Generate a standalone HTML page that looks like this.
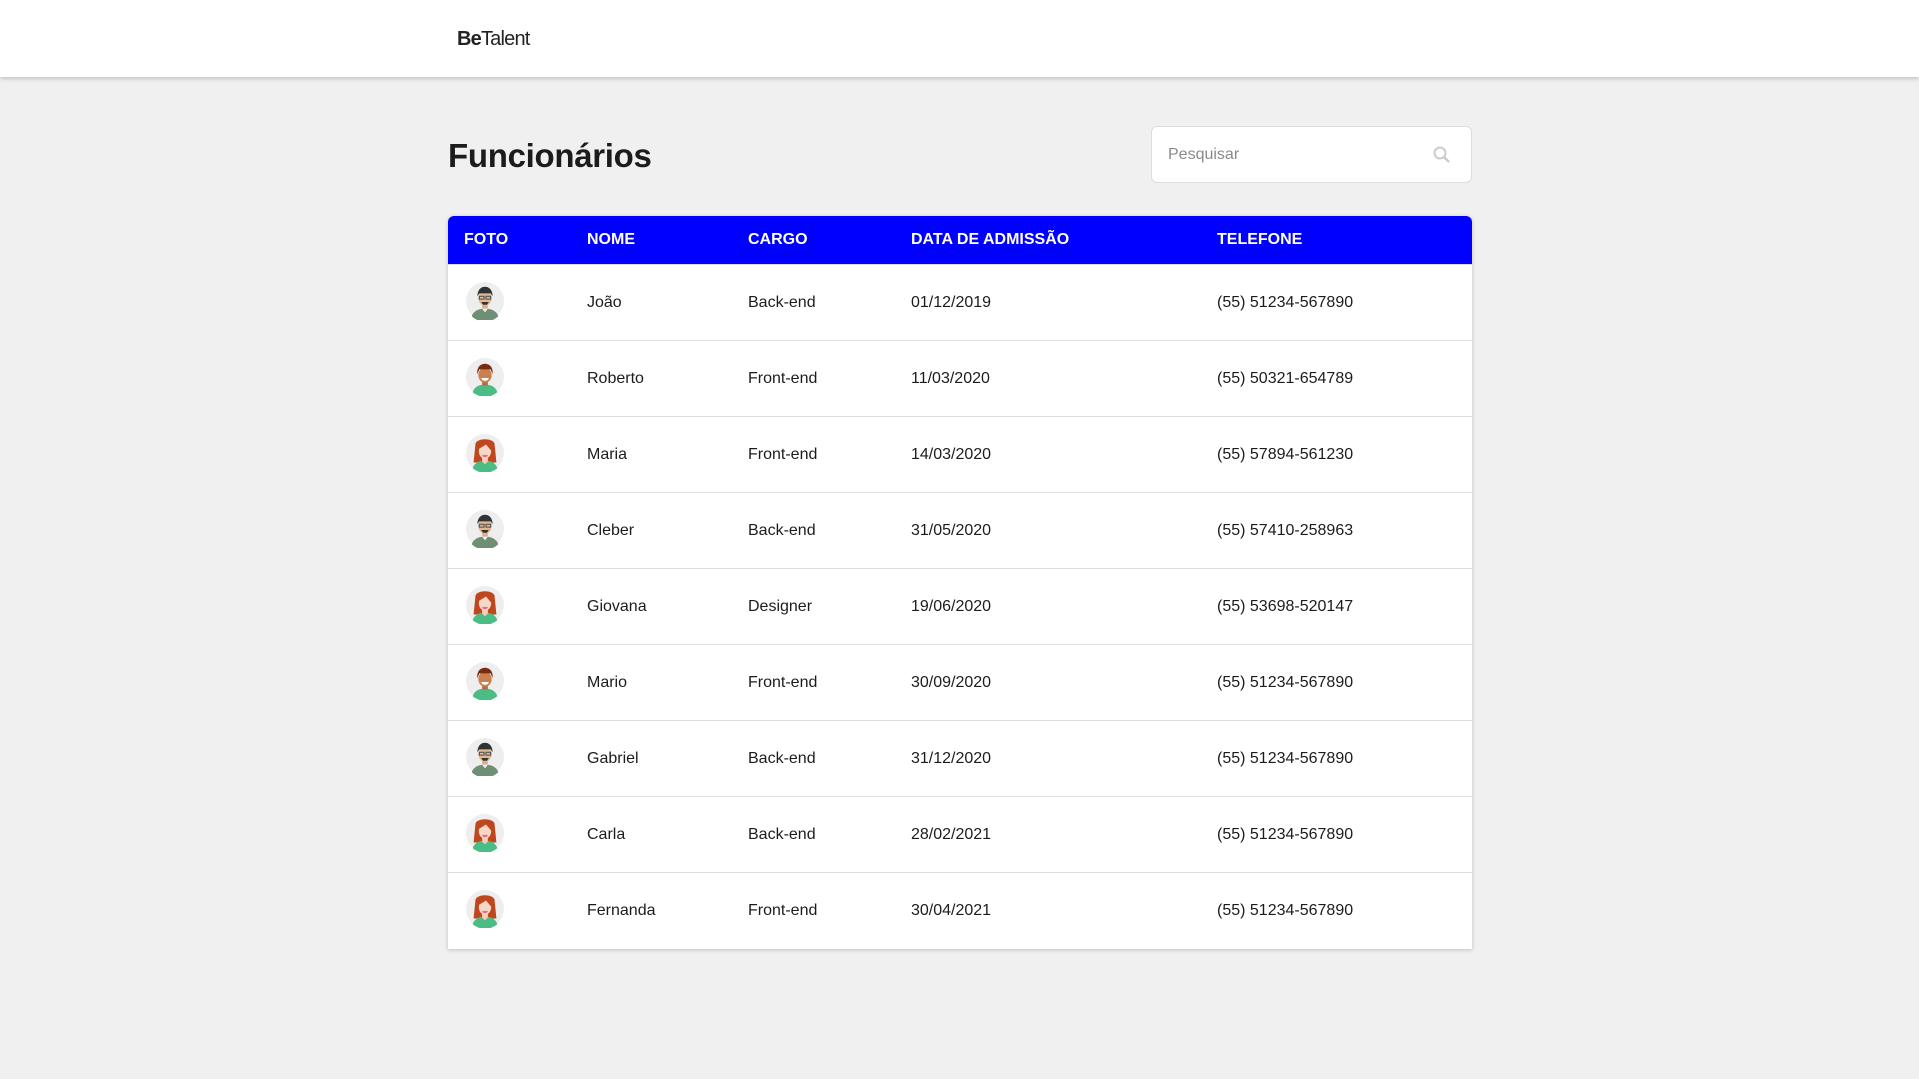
<!DOCTYPE html>
<html><head><meta charset="utf-8"><style>
*{margin:0;padding:0;box-sizing:border-box}
body{width:1919px;height:1079px;background:#f0f0f0;font-family:"Liberation Sans",Arial,sans-serif;color:#1c1c1c;overflow:hidden;position:relative}
.top{position:absolute;left:0;top:0;width:1919px;height:77px;background:#fff;box-shadow:0 2px 4px rgba(0,0,0,.18)}
.logo{position:absolute;left:457px;top:28px;font-size:20px;letter-spacing:-0.8px;color:#222}
.logo b{font-weight:bold}
h1{position:absolute;left:448px;top:137px;font-size:33px;letter-spacing:-0.3px;font-weight:bold;color:#1c1c1c}
.search{position:absolute;left:1151px;top:126px;width:321px;height:57px;background:#fff;border:1px solid #ddd;border-radius:6px}
.search span{position:absolute;left:16px;top:19px;font-size:16px;color:#8a8a8a}
.search svg{position:absolute;right:19px;top:18px}
.tbl{position:absolute;left:448px;top:216px;width:1024px;height:733px;background:#fff;border-radius:6px 6px 0 0;box-shadow:0 1px 4px rgba(0,0,0,.2);overflow:hidden}
.hd{height:48px;background:#0000ff;color:#fff;font-weight:bold;font-size:16px;position:relative}
.row{height:76px;border-top:1px solid #ddd;position:relative;font-size:16px}
.row:first-of-type{border-top:none}
.c{position:absolute;top:50%;transform:translateY(-50%);white-space:nowrap}
.c1{left:16px}.c2{left:139px}.c3{left:300px}.c4{left:463px}.c5{left:769px}
.av{left:18px;width:38px;height:38px;margin-top:-2px}
</style></head><body>
<div class="top"><div class="logo"><b>Be</b>Talent</div></div>
<h1>Funcionários</h1>
<div class="search"><span>Pesquisar</span>
<svg width="20" height="20" viewBox="0 0 20 20"><circle cx="8" cy="8" r="5.5" fill="none" stroke="#ccc" stroke-width="2"/><line x1="12" y1="12" x2="17" y2="17" stroke="#ccc" stroke-width="2.5"/></svg></div>
<svg width="0" height="0" style="position:absolute">
<defs>
<symbol id="m1" viewBox="0 0 40 40"><circle cx="20" cy="20" r="20" fill="#eee"/><path d="M6 36c2-6 8-8 14-8s12 2 14 8a20 20 0 0 1-28 0z" fill="#6f8f74"/><path d="M16 27l4 5 4-5z" fill="#eee"/><rect x="17" y="22" width="6" height="6" fill="#d9b08c"/><ellipse cx="20" cy="17" rx="7" ry="8" fill="#e0b892"/><path d="M12 15c0-7 4-10 8-10s8 3 8 10l-2-3h-12z" fill="#2f3333"/><rect x="14" y="15" width="5" height="3" fill="none" stroke="#444"/><rect x="21" y="15" width="5" height="3" fill="none" stroke="#444"/><path d="M16 21h8l-2 3h-4z" fill="#333"/></symbol>
<symbol id="m2" viewBox="0 0 40 40"><circle cx="20" cy="20" r="20" fill="#eee"/><path d="M7 36c2-6 7-8 13-8s11 2 13 8a20 20 0 0 1-26 0z" fill="#4bbd84"/><rect x="17" y="23" width="6" height="6" fill="#b56a3c"/><ellipse cx="20" cy="18" rx="7" ry="8" fill="#c8804f"/><path d="M12 17c-1-8 4-11 8-11s9 3 8 11l-2-5h-12z" fill="#7a2c12"/><path d="M16 21h8a4 3 0 0 1-8 0z" fill="#fff"/></symbol>
<symbol id="f1" viewBox="0 0 40 40"><circle cx="20" cy="20" r="20" fill="#eee"/><path d="M10 10c2-6 18-6 20 0l2 20h-24z" fill="#c0461e"/><path d="M7 36c2-6 7-8 13-8s11 2 13 8a20 20 0 0 1-26 0z" fill="#4bbd84"/><path d="M17 23v6l3 3 3-3v-6z" fill="#f3cfba"/><ellipse cx="20" cy="18" rx="6.5" ry="8" fill="#f7d8c5"/><path d="M13 16c1-6 5-9 9-8 4 1 6 5 5 10l-6-7z" fill="#c0461e"/><path d="M17 22h6a3 2.5 0 0 1-6 0z" fill="#e56b8a"/></symbol>
</defs></svg>
<div class="tbl">
<div class="hd"><span class="c c1">FOTO</span><span class="c c2">NOME</span><span class="c c3">CARGO</span><span class="c c4">DATA DE ADMISSÃO</span><span class="c c5">TELEFONE</span></div>
<div class="row"><svg class="c av"><use href="#m1"/></svg><span class="c c2">João</span><span class="c c3">Back-end</span><span class="c c4">01/12/2019</span><span class="c c5">(55) 51234-567890</span></div>
<div class="row"><svg class="c av"><use href="#m2"/></svg><span class="c c2">Roberto</span><span class="c c3">Front-end</span><span class="c c4">11/03/2020</span><span class="c c5">(55) 50321-654789</span></div>
<div class="row"><svg class="c av"><use href="#f1"/></svg><span class="c c2">Maria</span><span class="c c3">Front-end</span><span class="c c4">14/03/2020</span><span class="c c5">(55) 57894-561230</span></div>
<div class="row"><svg class="c av"><use href="#m1"/></svg><span class="c c2">Cleber</span><span class="c c3">Back-end</span><span class="c c4">31/05/2020</span><span class="c c5">(55) 57410-258963</span></div>
<div class="row"><svg class="c av"><use href="#f1"/></svg><span class="c c2">Giovana</span><span class="c c3">Designer</span><span class="c c4">19/06/2020</span><span class="c c5">(55) 53698-520147</span></div>
<div class="row"><svg class="c av"><use href="#m2"/></svg><span class="c c2">Mario</span><span class="c c3">Front-end</span><span class="c c4">30/09/2020</span><span class="c c5">(55) 51234-567890</span></div>
<div class="row"><svg class="c av"><use href="#m1"/></svg><span class="c c2">Gabriel</span><span class="c c3">Back-end</span><span class="c c4">31/12/2020</span><span class="c c5">(55) 51234-567890</span></div>
<div class="row"><svg class="c av"><use href="#f1"/></svg><span class="c c2">Carla</span><span class="c c3">Back-end</span><span class="c c4">28/02/2021</span><span class="c c5">(55) 51234-567890</span></div>
<div class="row"><svg class="c av"><use href="#f1"/></svg><span class="c c2">Fernanda</span><span class="c c3">Front-end</span><span class="c c4">30/04/2021</span><span class="c c5">(55) 51234-567890</span></div>
</div>
</body></html>
